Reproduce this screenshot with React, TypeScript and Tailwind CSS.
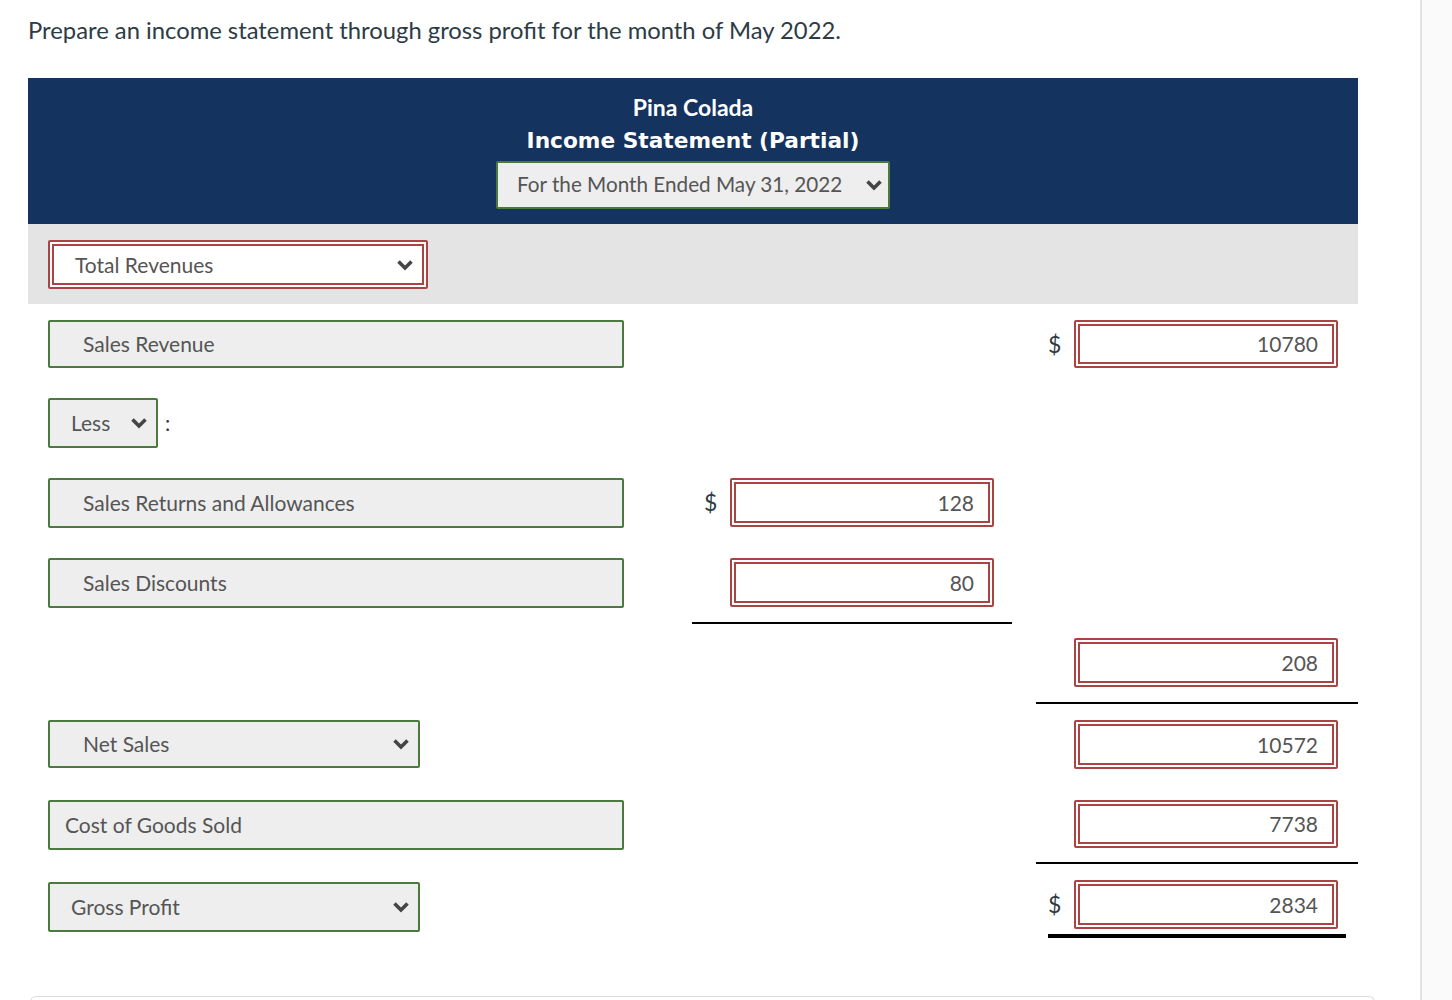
import React from "react";

function Chevron() {
  return (
    <svg width="18" height="12" viewBox="0 0 18 12" className="shrink-0">
      <polyline points="2.5,2.5 9,9 15.5,2.5" fill="none" stroke="#454545" strokeWidth="3.6" strokeLinejoin="miter" />
    </svg>
  );
}

function GreenField({ w, h = 48, pl, text, chevron = false }: { w: string; h?: number; pl: string; text: string; chevron?: boolean }) {
  return (
    <div
      className={`${w} ${pl} flex items-center justify-between rounded-[2px] border-2 border-[#4a7a3d] bg-[#eeeeee] pr-2 text-[21px] text-[#555555]`}
      style={{ height: h }}
    >
      <span>{text}</span>
      {chevron && <Chevron />}
    </div>
  );
}

function RedInput({ value, h = 48 }: { value: string; h?: number }) {
  return (
    <div className="w-[264px] rounded-[2px] border-2 border-[#a94442] bg-white p-[2px]" style={{ height: h }}>
      <div className="flex h-full items-center justify-end border-2 border-[#a94442] pr-[14px] text-[21px] text-[#555555]">
        {value}
      </div>
    </div>
  );
}

function Amount({ value, dollar = false, h = 48 }: { value: string; dollar?: boolean; h?: number }) {
  return (
    <div className="flex items-center">
      <span className="w-[26px] text-[23px] text-[#2d3b45]">{dollar ? "$" : ""}</span>
      <RedInput value={value} h={h} />
    </div>
  );
}

function Row({
  pt,
  left,
  mid,
  right,
  midLine = false,
  rightLine = false,
  children,
}: {
  pt: string;
  left?: React.ReactNode;
  mid?: React.ReactNode;
  right?: React.ReactNode;
  midLine?: boolean;
  rightLine?: boolean;
  children?: React.ReactNode;
}) {
  return (
    <div className="flex h-[80px]">
      <div className={`w-[664px] pl-5 ${pt}`}>{left}</div>
      <div className={`w-[320px] pl-3 ${pt} ${midLine ? "border-b-2 border-black" : ""}`}>{mid}</div>
      <div className={`ml-[24px] w-[322px] pl-3 ${pt} ${rightLine ? "border-b-2 border-black" : ""}`}>
        {right}
        {children}
      </div>
    </div>
  );
}

export default function App() {
  return (
    <div className="flex min-h-screen w-[1452px] bg-white font-['Lato',sans-serif]">
      <main className="w-[1420px] pl-[28px] pt-[16px]">
        <p className="text-[23.8px] leading-[28px] text-[#2d3b45]">
          Prepare an income statement through gross profit for the month of May 2022.
        </p>

        <div className="mt-[34px] w-[1330px]">
          {/* Header */}
          <div className="flex h-[146px] flex-col items-center bg-[#15335f] pt-[14px] text-white">
            <div className="h-[30px] text-[23px] font-bold leading-[30px]">Pina Colada</div>
            <div className="mt-[4px] h-[30px] font-['DejaVu_Sans',sans-serif] text-[21.7px] font-bold leading-[30px]">
              Income Statement (Partial)
            </div>
            <div className="mt-[5px] flex h-[48px] w-[394px] items-center justify-between rounded-[2px] border-2 border-[#4a7a3d] bg-[#eeeeee] pl-[19px] pr-[5px] text-[20.7px] text-[#555555]">
              <span>For the Month Ended May 31, 2022</span>
              <Chevron />
            </div>
          </div>

          {/* Gray band */}
          <div className="h-[80px] bg-[#e4e4e4] pl-5 pt-[16px]">
            <div className="h-[49px] w-[380px] rounded-[2px] border-2 border-[#a94442] bg-white p-[2px]">
              <div className="flex h-full items-center justify-between border-2 border-[#a94442] pl-[21px] pr-[8px] text-[21px] text-[#555555]">
                <span>Total Revenues</span>
                <Chevron />
              </div>
            </div>
          </div>

          <Row
            pt="pt-[16px]"
            left={<GreenField w="w-[576px]" pl="pl-[33px]" text="Sales Revenue" />}
            right={<Amount value="10780" dollar />}
          />
          <Row
            pt="pt-[14px]"
            left={
              <div className="flex items-center">
                <GreenField w="w-[110px]" h={50} pl="pl-[21px]" text="Less" chevron />
                <span className="ml-[7px] text-[21px] text-[#2d3b45]">:</span>
              </div>
            }
          />
          <Row
            pt="pt-[14px]"
            left={<GreenField w="w-[576px]" h={50} pl="pl-[33px]" text="Sales Returns and Allowances" />}
            mid={<Amount value="128" dollar h={49} />}
          />
          <Row
            pt="pt-[14px]"
            midLine
            left={<GreenField w="w-[576px]" h={50} pl="pl-[33px]" text="Sales Discounts" />}
            mid={<Amount value="80" h={49} />}
          />
          <Row pt="pt-[14px]" rightLine right={<Amount value="208" h={49} />} />
          <Row
            pt="pt-[16px]"
            left={<GreenField w="w-[372px]" pl="pl-[33px]" text="Net Sales" chevron />}
            right={<Amount value="10572" h={49} />}
          />
          <Row
            pt="pt-[16px]"
            rightLine
            left={<GreenField w="w-[576px]" h={50} pl="pl-[15px]" text="Cost of Goods Sold" />}
            right={<Amount value="7738" />}
          />
          <Row
            pt="pt-[16px]"
            left={
              <div className="pt-[2px]">
                <GreenField w="w-[372px]" h={50} pl="pl-[21px]" text="Gross Profit" chevron />
              </div>
            }
            right={<Amount value="2834" dollar h={49} />}
          >
            <div className="mt-[5px] h-[4px] w-[298px] bg-black" />
          </Row>
        </div>

        <div className="ml-[2px] mt-[52px] h-[20px] w-[1345px] rounded-t-[6px] border-x border-t border-[#dddddd]" />
      </main>
      <aside className="flex-1 border-l-2 border-[#e2e2e2] bg-[#fafafa]" />
    </div>
  );
}
